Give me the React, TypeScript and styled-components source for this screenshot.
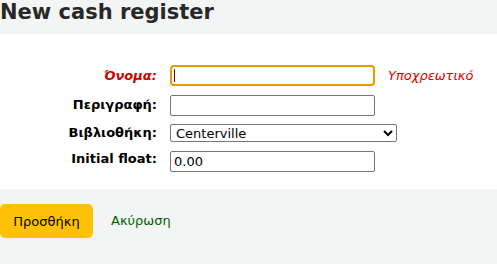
import styled, { createGlobalStyle } from 'styled-components';

const GlobalStyle = createGlobalStyle`
	html, body {
		margin: 0;
		padding: 0;
		background: #ffffff;
	}
	body {
		font-family: "DejaVu Sans", "Noto Sans", sans-serif;
		font-size: 13px;
		color: #000;
	}
`;

const Header = styled.div`
	background-color: #f3f4f4;
	height: 34px;
`;

const Title = styled.h1`
	margin: 0;
	font-size: 21px;
	font-weight: bold;
	line-height: 22px;
	padding-top: 1px;
	color: #282829;
`;

const Form = styled.form`
	margin: 0;
`;

const Fieldset = styled.fieldset`
	margin: 0;
	border: 0;
	padding: 31px 0 17px;
	display: flex;
	flex-direction: column;
`;

const Row = styled.div<{ gap?: number }>`
	display: flex;
	align-items: flex-start;
	margin-bottom: ${({ gap = 9 }) => gap}px;
	&:last-child {
		margin-bottom: 0;
	}
`;

const Label = styled.label<{ required?: boolean; offset?: number }>`
	width: 157px;
	margin-right: 13px;
	padding-top: ${({ offset = 2 }) => offset}px;
	text-align: right;
	font-weight: bold;
	font-size: 13px;
	color: ${({ required }) => (required ? '#cc0000' : '#000')};
	font-style: ${({ required }) => (required ? 'italic' : 'normal')};
`;

const FieldWrap = styled.div`
	position: relative;
	display: flex;
`;

const TextInput = styled.input<{ focused?: boolean }>`
	box-sizing: border-box;
	width: 205px;
	height: 21px;
	margin: 0;
	padding: 1px 3px;
	font-family: "DejaVu Sans", sans-serif;
	font-size: 13px;
	color: #000;
	background: #fff;
	border: ${({ focused }) => (focused ? '2px solid #e69c00' : '1px solid #767676')};
	border-radius: ${({ focused }) => (focused ? '4px' : '2px')};
	outline: none;
`;

const Caret = styled.span`
	position: absolute;
	left: 4px;
	top: 4px;
	width: 1px;
	height: 13px;
	background: #8b0000;
`;

const Select = styled.select`
	box-sizing: border-box;
	width: 227px;
	height: 18px;
	margin: 0;
	padding: 0 1px;
	font-family: "DejaVu Sans", sans-serif;
	font-size: 13px;
	color: #000;
	background: #fff;
	border: 1px solid #767676;
	border-radius: 2px;
`;

const Hint = styled.span`
	margin-left: 13px;
	padding-top: 3px;
	font-style: italic;
	font-size: 13px;
	color: #dd0000;
`;

const Actions = styled.div`
	background-color: #f3f4f4;
	height: 76px;
	padding-top: 15px;
	box-sizing: border-box;
	display: flex;
	align-items: flex-start;
`;

const SubmitButton = styled.button`
	width: 93px;
	height: 34px;
	margin: 0;
	padding: 0;
	font-family: "DejaVu Sans", sans-serif;
	font-size: 13px;
	color: #000;
	background-color: #ffc107;
	border: 0;
	border-radius: 5px;
	cursor: pointer;
`;

const CancelLink = styled.a`
	margin-left: 18px;
	line-height: 34px;
	font-size: 13px;
	color: #006100;
	text-decoration: none;
`;

export default function App() {
	return (
		<>
			<GlobalStyle />
			<Header>
				<Title>New cash register</Title>
			</Header>
			<Form onSubmit={(e) => e.preventDefault()}>
				<Fieldset>
					<Row>
						<Label required offset={3}>Όνομα:</Label>
						<FieldWrap>
							<TextInput focused />
							<Caret />
						</FieldWrap>
						<Hint>Υποχρεωτικό</Hint>
					</Row>
					<Row gap={8}>
						<Label>Περιγραφή:</Label>
						<TextInput />
					</Row>
					<Row>
						<Label offset={1}>Βιβλιοθήκη:</Label>
						<Select defaultValue="CPL">
							<option value="CPL">Centerville</option>
							<option value="FFL">Fairfield</option>
						</Select>
					</Row>
					<Row>
						<Label offset={0}>Initial float:</Label>
						<TextInput defaultValue="0.00" />
					</Row>
				</Fieldset>
				<Actions>
					<SubmitButton type="submit">Προσθήκη</SubmitButton>
					<CancelLink href="#">Ακύρωση</CancelLink>
				</Actions>
			</Form>
		</>
	);
}
